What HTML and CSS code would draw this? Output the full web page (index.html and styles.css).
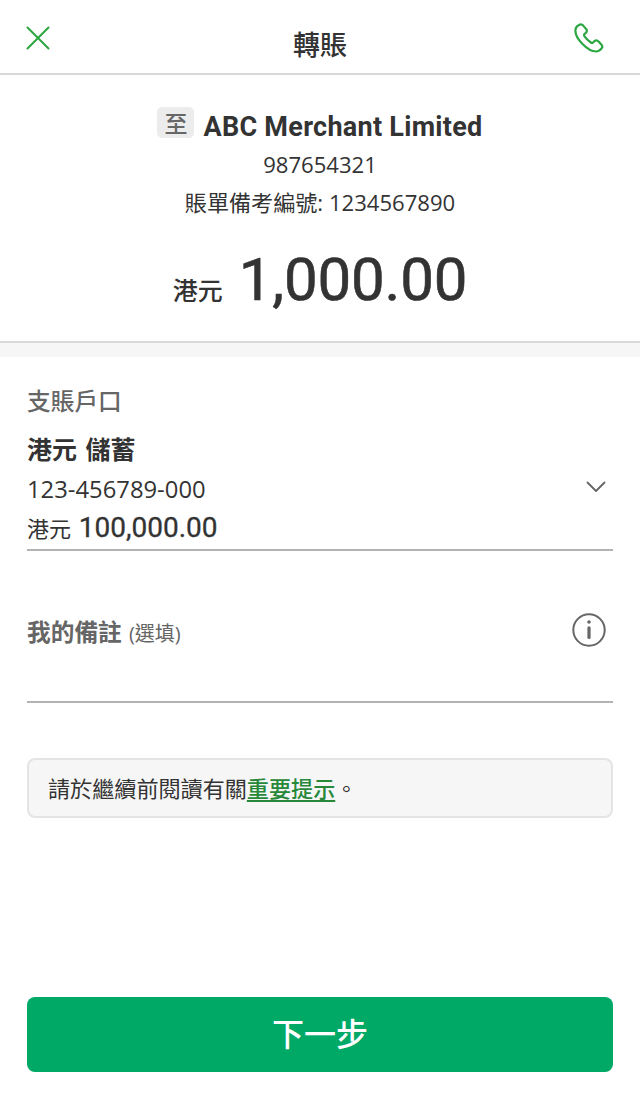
FILE: index.html
```
<!DOCTYPE html>
<html lang="zh-HK">
<head>
  <meta charset="UTF-8">
  <meta name="viewport" content="width=device-width, initial-scale=1.0">
  <title>轉賬</title>
  <link rel="stylesheet" href="styles.css">
</head>
<body>
  <header class="topbar">
    <svg class="icon-close" viewBox="0 0 24 24"><path d="M1.500 1.500L22.500 22.500M22.500 1.500L1.500 22.500"/></svg>
    <h1>轉賬</h1>
    <svg class="icon-phone" viewBox="0 0 30 30"><path d="M4.600 2.300C2.700 3.200 1.500 4.800 1.400 7.400C1.200 15.500 13.800 28.500 22 28.500C24.600 28.500 26.300 27.200 27.700 25.200C28.600 23.900 28.500 22.700 27.500 21.700L24.800 18.700C23.400 17.200 21.900 17 20.500 18.100L19.200 19.300C18.400 20 17.600 20 16.900 19.500C14.200 17.700 12.200 15.700 10.400 13.100C9.900 12.300 10 11.600 10.700 10.900L12 9.700C13.200 8.500 13.100 7 12 5.900L9.200 2.600C7.800 1.100 6.200 1.200 4.600 2.300Z"/></svg>
  </header>

  <section class="payee">
    <div class="payee-name"><span class="tag">至</span><strong>ABC Merchant Limited</strong></div>
    <p class="payee-line">987654321</p>
    <p class="payee-line">賬單備考編號: 1234567890</p>
    <div class="amount"><span class="currency">港元</span><span class="value">1,000.00</span></div>
  </section>

  <main>
    <section class="field account">
      <div class="label">支賬戶口</div>
      <div class="account-row">
        <div>
          <div class="account-name">港元 儲蓄</div>
          <div class="account-number">123-456789-000</div>
          <div class="balance">港元 <span>100,000.00</span></div>
        </div>
        <svg class="icon-down" viewBox="0 0 20 12"><path d="M1.500 1.500L10 10L18.500 1.500"/></svg>
      </div>
    </section>

    <section class="field remark">
      <div class="label">我的備註 <small>(選填)</small></div>
      <svg class="icon-info" viewBox="0 0 34 34">
        <circle cx="17" cy="17" r="15.700"/>
        <path d="M17 14.800V24.500"/>
        <circle class="dot" cx="17" cy="9" r="1.800"/>
      </svg>
    </section>

    <div class="notice">請於繼續前閱讀有關<a href="#">重要提示</a>。</div>
  </main>

  <button class="next">下一步</button>
</body>
</html>
```
FILE: styles.css
```
* {
  box-sizing: border-box;
}

body {
  display: flex;
  flex-direction: column;
  height: 1100px;
  margin: 0;
  background: #fff;
  color: #333;
  font-family: "Open Sans", "Noto Sans CJK TC", sans-serif;
}

svg {
  display: block;
  fill: none;
  stroke: #666;
  stroke-width: 2;
  stroke-linecap: round;
  stroke-linejoin: round;
}

/* header */
.topbar {
  display: flex;
  justify-content: space-between;
  height: 75px;
  padding: 22px 36px 0 26px;
  border-bottom: 2px solid #d9d9d9;
}

.topbar h1 {
  margin: 3px 0 0 16px;
  font-size: 27px;
  font-weight: 500;
  line-height: 40px;
}

.icon-close {
  width: 24px;
  height: 24px;
  margin-top: 4px;
  stroke: #2ba640;
}

.icon-phone {
  width: 30px;
  height: 30px;
  margin-top: 1px;
  stroke: #2ba640;
  stroke-width: 2.2;
}

/* payee */
.payee {
  height: 282px;
  padding-top: 32px;
  border-bottom: 14px solid #f6f6f6;
  box-shadow: inset 0 -2px #d9d9d9;
  text-align: center;
}

.payee-name {
  display: flex;
  justify-content: center;
  gap: 9px;
  height: 38px;
}

.tag {
  width: 37px;
  height: 31px;
  border-radius: 5px;
  background: #ececec;
  color: #666;
  font-size: 23px;
  font-weight: 500;
  line-height: 32px;
}

.payee-name strong {
  font-family: Roboto, sans-serif;
  font-size: 27px;
  font-weight: 700;
  line-height: 41px;
  letter-spacing: 0.28px;
}

.payee-line {
  margin: 0;
  font-size: 22.1px;
  line-height: 38px;
}

.amount {
  display: flex;
  justify-content: center;
  align-items: baseline;
  gap: 16px;
  margin-top: 24px;
  line-height: 70px;
}

.currency {
  font-size: 25px;
  font-weight: 500;
}

.value {
  font-family: Roboto, sans-serif;
  font-size: 60px;
  font-weight: 400;
  letter-spacing: -0.2px;
  -webkit-text-stroke: 0.6px #333;
}

/* form */
main {
  padding: 0 27px;
}

.field {
  border-bottom: 2px solid #b3b3b3;
}

.label {
  color: #666;
  font-size: 23.7px;
  font-weight: 500;
}

.account {
  height: 194px;
  padding-top: 24px;
}

.account .label {
  line-height: 40px;
}

.account-row {
  display: flex;
  justify-content: space-between;
  align-items: center;
  padding: 8px 7px 0 0;
}

.account-name {
  font-size: 25px;
  font-weight: 700;
  line-height: 40px;
  word-spacing: 2px;
}

.account-number {
  font-size: 23.8px;
  line-height: 40px;
}

.balance {
  font-size: 22px;
  line-height: 37px;
}

.balance span {
  margin-left: 2px;
  font-family: Roboto, sans-serif;
  font-size: 28px;
  font-weight: 400;
  -webkit-text-stroke: 0.3px #333;
}

.icon-down {
  width: 20px;
  height: 12px;
  margin-bottom: 2px;
  stroke-width: 1.8;
}

.remark {
  display: flex;
  justify-content: space-between;
  height: 152px;
  padding: 62px 7px 0 0;
}

.remark .label {
  font-weight: 700;
  line-height: 38px;
}

.remark small {
  margin-left: 1px;
  font-size: 20px;
  font-weight: 400;
}

.icon-info {
  width: 34px;
  height: 34px;
}

.icon-info path {
  stroke-width: 3.2;
}

.icon-info .dot {
  fill: #666;
  stroke: none;
}

.notice {
  height: 60px;
  margin-top: 55px;
  padding-left: 19px;
  border: 2px solid #e4e4e4;
  border-radius: 8px;
  background: #f6f6f6;
  font-size: 22.1px;
  line-height: 56px;
}

.notice a {
  color: #28883a;
  font-weight: 500;
  text-decoration-thickness: 2px;
  text-underline-offset: 3px;
}

.next {
  height: 75px;
  margin: auto 27px 28px;
  padding: 0 0 6px;
  border: 0;
  border-radius: 8px;
  background: #00a966;
  color: #fff;
  font-family: inherit;
  font-size: 32px;
  font-weight: 500;
}
```
